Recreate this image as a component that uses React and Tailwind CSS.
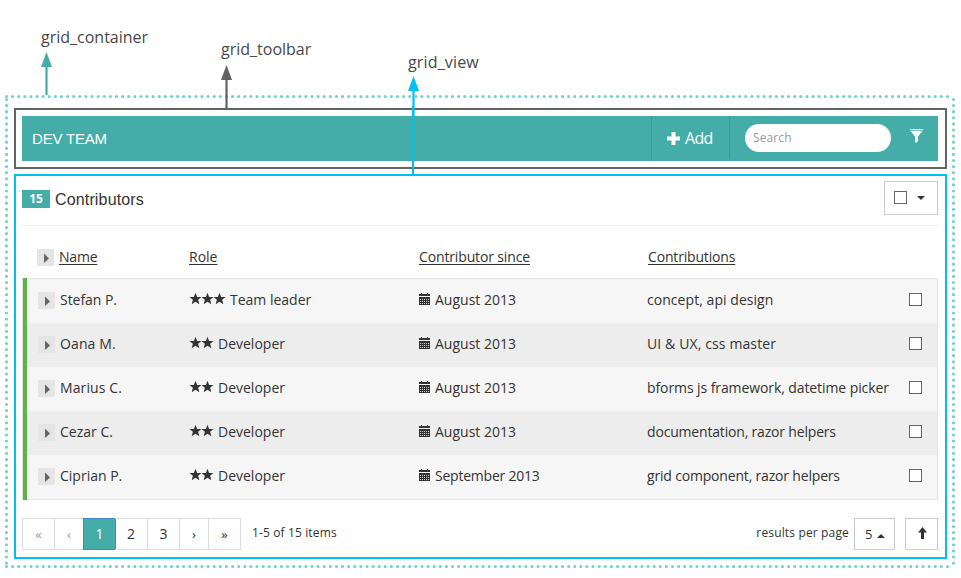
const rows = [
  { name: "Stefan P.", stars: 3, role: "Team leader", since: "August 2013", work: "concept, api design", nameFit: "tracking-[-0.05px]", workFit: "tracking-[0.05px]" },
  { name: "Oana M.", stars: 2, role: "Developer", since: "August 2013", work: "UI & UX, css master", nameFit: "tracking-[0.12px]", workFit: "tracking-[0.12px]" },
  { name: "Marius C.", stars: 2, role: "Developer", since: "August 2013", work: "bforms js framework, datetime picker", nameFit: "tracking-[0.12px]", workFit: "tracking-[-0.09px]" },
  { name: "Cezar C.", stars: 2, role: "Developer", since: "August 2013", work: "documentation, razor helpers", nameFit: "", workFit: "tracking-[-0.18px]" },
  { name: "Ciprian P.", stars: 2, role: "Developer", since: "September 2013", sinceFit: "tracking-[-0.22px]", work: "grid component, razor helpers", nameFit: "", workFit: "tracking-[-0.18px]" },
];

const columns = "grid grid-cols-[152px_229px_228px_1fr]";

function Expander() {
  return (
    <span className="flex h-[17px] w-[17px] shrink-0 items-center justify-center bg-[#e5e5e5]">
      <svg width="17" height="17" viewBox="0 0 17 17">
        <path d="M7 4.5L12 9.5L7 14Z" fill="#666" />
      </svg>
    </span>
  );
}

function Stars({ count }) {
  return (
    <svg width={count * 12} height="12" viewBox={`0 0 ${count * 12} 12`} className="shrink-0 overflow-visible">
      {Array.from({ length: count }, (_, i) => (
        <path
          key={i}
          transform={`translate(${i * 12} 0)`}
          d="M5.5 -0.3L7.1 4H11.5L8.1 6.8L9.3 11.2L5.5 8.7L1.7 11.2L2.9 6.8L-0.5 4H3.9Z"
          fill="#333"
        />
      ))}
    </svg>
  );
}

function Calendar() {
  return (
    <svg width="11" height="12" viewBox="0 0 11 12" className="shrink-0" shapeRendering="crispEdges">
      <path d="M0 1H2V0H3V1H8V0H9V1H11V3H0ZM0 4H11V12H0Z" fill="#333" />
      {[6, 8, 10].map((y) =>
        [1, 3, 5, 7, 9].map((x) => <rect key={`${x}-${y}`} x={x} y={y} width="1" height="1" fill="#ccc" />)
      )}
    </svg>
  );
}

function Box() {
  return <span className="block h-[13px] w-[13px] shrink-0 border border-[#666] bg-white" />;
}

function Page({ children, className }) {
  return (
    <span className={`flex h-8 items-center justify-center border border-[#ddd] ${className}`}>{children}</span>
  );
}

function Annotations() {
  return (
    <>
      <svg className="absolute left-0 top-0" width="961" height="578" viewBox="0 0 961 578">
        <g stroke="#70d3cc" strokeWidth="3.2" strokeLinecap="round" fill="none">
          <path d="M6.5 96.5H953.5M6.5 566.5H953.5" strokeDasharray="0 6.11" />
          <path d="M6.5 99.5V566.5M953.5 99.5V566.5" strokeDasharray="0 6.1" />
        </g>
        <path d="M46.5 52L52 67H41Z" fill="#45ada8" />
        <rect x="45.4" y="66" width="2.2" height="29" fill="#45ada8" />
        <path d="M226.5 65L232 80H221Z" fill="#636363" />
        <rect x="225.4" y="79" width="2.2" height="29" fill="#636363" />
        <path d="M413.5 76L419 91H408Z" fill="#00bff3" />
        <rect x="412.4" y="90" width="2.2" height="26" fill="#00bff3" />
        <rect x="412" y="106" width="2" height="69" fill="#00bff3" />
      </svg>
      <span className="absolute left-[41px] top-[26px] text-[16px] leading-[22px] text-[#484848]">grid_container</span>
      <span className="absolute left-[221px] top-[38px] text-[16px] leading-[22px] text-[#484848]">grid_toolbar</span>
      <span className="absolute left-[408px] top-[51px] text-[16px] leading-[22px] tracking-[0.15px] text-[#484848]">grid_view</span>
    </>
  );
}

export default function App() {
  return (
    <div className="relative h-[578px] w-[961px] overflow-hidden bg-white pl-[5px] pt-[95px] font-['Open_Sans',sans-serif] text-[14px] leading-5 text-[#333]">
      <div className="h-[473px] w-[950px] pl-[9px] pt-[13px]">
        <div className="h-[61px] w-[933px] border-2 border-[#636363] p-[6px]">
          <div className="flex h-[45px] w-[916px] bg-[#45ada8] text-white">
            <div className="flex flex-1 items-center pl-[10px] font-['Liberation_Sans',sans-serif] text-[15px] tracking-[-0.2px]">DEV TEAM</div>
            <div className="flex w-[78px] items-center border-l border-[#3b9a95] pl-[15px] text-[16px]">
              <svg width="13" height="13" viewBox="0 0 13 13">
                <path d="M4.5 0H8.5V4.5H13V8.5H8.5V13H4.5V8.5H0V4.5H4.5Z" fill="#fff" />
              </svg>
              <span className="mb-px ml-[5px] tracking-[-0.7px]">Add</span>
            </div>
            <div className="flex h-[43px] w-[16px] border-l border-[#3b9a95]" />
            <div className="mt-2 flex h-7 w-[146px] items-center rounded-full bg-white pl-2 text-[12px] tracking-[0.1px] text-[#999]">Search</div>
            <svg className="ml-[19px] mr-[15px] mt-[13px]" width="13" height="14" viewBox="0 0 13 14">
              <path d="M0 0H13V1.2H0ZM0.5 2H12.5L8 7.5V12L6.5 13.5H5V7.5Z" fill="#fff" />
            </svg>
          </div>
        </div>

        <div className="mt-[5px] h-[385px] w-[933px] border-2 border-[#00bff3] px-[6px] pt-[5px]">
          <div className="flex h-[45px] w-[916px] border-b border-[#eee]">
            <span className="mt-[9px] flex h-[18px] w-7 items-center justify-center bg-[#45ada8] text-[12px] font-bold text-white">15</span>
            <span className="ml-[5px] mt-[9px] font-['Liberation_Sans',sans-serif] text-[16px] tracking-[0.15px]">Contributors</span>
            <span className="ml-auto flex h-[34px] w-[54px] border border-[#ccc] pl-[9px] pt-[9px]">
              <Box />
              <svg className="ml-[10px] mt-[5px]" width="8" height="4" viewBox="0 0 8 4">
                <path d="M0 0H8L4 4Z" fill="#333" />
              </svg>
            </span>
          </div>

          <div className={`${columns} h-[52px] w-[916px] pl-[15px] pt-[21px] underline underline-offset-2`}>
            <div className="flex">
              <span className="mt-[2px]"><Expander /></span>
              <span className="ml-[5px] tracking-[-0.2px]">Name</span>
            </div>
            <div>Role</div>
            <div className="pl-px tracking-[-0.14px]">Contributor since</div>
            <div className="pl-[2px] tracking-[-0.17px]">Contributions</div>
          </div>

          <div className="flex h-[222px] w-[916px]">
            <div className="w-px bg-[#e5e5e5]" />
            <div className="w-1 bg-[#5bb543]" />
            <div className="flex-1 border-y border-r border-[#e5e5e5]">
              {rows.map((row) => (
                <div key={row.name} className="flex h-11 bg-[#f6f6f6] pl-[11px] even:bg-[#ededed]">
                  <div className={`${columns} flex-1 pt-[11px]`}>
                    <div className="flex">
                      <span className="mt-[2px]"><Expander /></span>
                      <span className={`ml-[5px] ${row.nameFit}`}>{row.name}</span>
                    </div>
                    <div className="flex">
                      <span className="mt-[3px]"><Stars count={row.stars} /></span>
                      <span className="ml-1">{row.role}</span>
                    </div>
                    <div className="flex">
                      <span className="mt-[3px]"><Calendar /></span>
                      <span className={`ml-[5px] ${row.sinceFit ?? ""}`}>{row.since}</span>
                    </div>
                    <div className={`whitespace-nowrap ${row.workFit}`}>{row.work}</div>
                  </div>
                  <div className="w-[28px] pt-[14px]"><Box /></div>
                </div>
              ))}
            </div>
          </div>

          <div className="mt-[18px] flex w-[916px] text-[13px]">
            <div className="flex">
              <Page className="w-[33px] text-[#999]">«</Page>
              <Page className="-ml-px w-[30px] text-[#999]">‹</Page>
              <Page className="-ml-px w-[33px] border-[#428bca]! bg-[#45ada8] text-[14px] text-white">1</Page>
              <Page className="-ml-px w-[33px] border-l-0 text-[14px]">2</Page>
              <Page className="-ml-px w-[33px] text-[14px]">3</Page>
              <Page className="-ml-px w-[30px]">›</Page>
              <Page className="-ml-px w-[33px]">»</Page>
            </div>
            <span className="ml-[11px] mt-[5px] text-[12px] tracking-[0.13px]">1-5 of 15 items</span>
            <span className="ml-auto mr-[5px] mt-[5px] text-[12px] tracking-[0.15px]">results per page</span>
            <span className="flex h-8 w-[41px] items-center border border-[#ccc] pl-[10px] text-[13px]">
              5
              <svg className="ml-[5px] mt-1" width="8" height="4" viewBox="0 0 8 4">
                <path d="M0 4H8L4 0Z" fill="#333" />
              </svg>
            </span>
            <span className="ml-[10px] flex h-8 w-[33px] justify-center border border-[#ccc] pt-2">
              <svg className="ml-[2px]" width="9" height="12" viewBox="0 0 9 12">
                <path d="M4.5 0L9 5.5H6V12H3V5.5H0Z" fill="#333" />
              </svg>
            </span>
          </div>
        </div>
      </div>
      <Annotations />
    </div>
  );
}
